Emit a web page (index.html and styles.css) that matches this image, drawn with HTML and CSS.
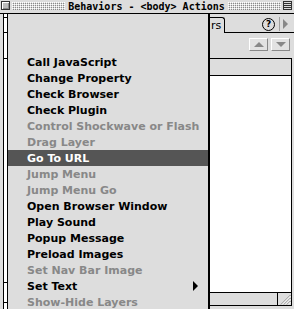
FILE: index.html
```html
<!DOCTYPE html>
<html>
<head>
<meta charset="utf-8">
<link rel="stylesheet" href="styles.css">
</head>
<body>
<div class="window">
  <div class="titlebar">
    <span class="closebox"></span>
    <span class="stripes"></span>
    <span class="title">Behaviors - &lt;body&gt; Actions</span>
    <span class="stripes"></span>
    <span class="collapsebox"></span>
  </div>
  <div class="content">
    <div class="leftstrip">
      <div class="ls-top"></div>
      <div class="ls-box"></div>
      <div class="ls-mid"></div>
      <div class="ls-long"></div>
      <div class="ls-low"></div>
    </div>
    <div class="behind"></div>
    <div class="panel">
      <div class="tabrow">
        <div class="tab">rs</div>
        <div class="tabfill">
          <span class="help">?</span>
          <span class="flyout"><i class="tri-right"></i></span>
        </div>
      </div>
      <div class="toolbar">
        <button class="arrowbtn"><i class="tri-up"></i></button>
        <button class="arrowbtn"><i class="tri-down"></i></button>
      </div>
      <div class="listbox">
        <div class="listhead"></div>
        <div class="listbody"></div>
        <div class="hscroll">
          <span class="track"></span>
          <span class="grip">
            <svg width="13" height="12" viewBox="0 0 13 12">
              <path d="M3 11.5 L12.5 2" stroke="#808080" stroke-width="1"/>
              <path d="M4 11.5 L12.5 3" stroke="#ffffff" stroke-width="1"/>
              <path d="M6 11.5 L12.5 5" stroke="#808080" stroke-width="1"/>
              <path d="M7 11.5 L12.5 6" stroke="#ffffff" stroke-width="1"/>
              <path d="M9 11.5 L12.5 8" stroke="#808080" stroke-width="1"/>
              <path d="M10 11.5 L12.5 9" stroke="#ffffff" stroke-width="1"/>
            </svg>
          </span>
        </div>
      </div>
    </div>
  </div>
  <div class="menu">
    <div class="item"><span>Call JavaScript</span></div>
    <div class="item"><span>Change Property</span></div>
    <div class="item"><span>Check Browser</span></div>
    <div class="item"><span>Check Plugin</span></div>
    <div class="item disabled"><span>Control Shockwave or Flash</span></div>
    <div class="item disabled"><span>Drag Layer</span></div>
    <div class="item active"><span>Go To URL</span></div>
    <div class="item disabled"><span>Jump Menu</span></div>
    <div class="item disabled"><span>Jump Menu Go</span></div>
    <div class="item"><span>Open Browser Window</span></div>
    <div class="item"><span>Play Sound</span></div>
    <div class="item"><span>Popup Message</span></div>
    <div class="item"><span>Preload Images</span></div>
    <div class="item disabled"><span>Set Nav Bar Image</span></div>
    <div class="item"><span>Set Text</span><i class="tri-sub"></i></div>
    <div class="item disabled"><span>Show-Hide Layers</span></div>
  </div>
</div>
</body>
</html>
```
FILE: styles.css
```css
body {
  margin: 0;
  background: #dddddd;
}

.window {
  position: relative;
  width: 294px;
  height: 309px;
  overflow: hidden;
  background: #dddddd;
  font-family: "DejaVu Sans", sans-serif;
  color: #000;
}

/* Title bar */
.titlebar {
  display: flex;
  align-items: flex-start;
  height: 13px;
  border-bottom: 1px solid #000;
  background: #dddddd;
}

.closebox {
  width: 9px;
  height: 9px;
  margin: 1px 2px 0 1px;
  box-sizing: border-box;
  border: 1px solid #333;
  background: #bbbbbb;
  box-shadow: inset 1px 1px 0 #ffffff, inset -1px -1px 0 #888888;
}

.stripes {
  flex: 1;
  height: 8px;
  margin-top: 2px;
  background: conic-gradient(from 90deg at 1px 1px, #8a8a8a 0 90deg, #dddddd 90deg 180deg, #ffffff 180deg 270deg, #dddddd 270deg) 0 0 / 2px 2px;
}

.title {
  font-family: "DejaVu Sans Mono", monospace;
  font-weight: bold;
  font-size: 10px;
  line-height: 13px;
  padding: 0 3px;
  white-space: nowrap;
}

.collapsebox {
  width: 9px;
  height: 9px;
  margin: 1px 2px 0 2px;
  box-sizing: border-box;
  border: 1px solid #333;
  background: repeating-linear-gradient(#dddddd 0 1px, #333333 1px 2px);
}

/* Content under the menu */
.content {
  display: flex;
  height: 295px;
}

.leftstrip {
  width: 3px;
  margin-left: 3px;
  border-left: 1px solid #000;
  background: #ffffff;
  display: flex;
  flex-direction: column;
}

.ls-top { height: 3px; }
.ls-box { height: 14px; border-top: 1px solid #000; border-bottom: 1px solid #000; }
.ls-mid { height: 25px; border-bottom: 1px solid #000; }
.ls-long { height: 223px; border-bottom: 1px solid #000; }
.ls-low { height: 19px; border-bottom: 1px solid #000; }

.behind {
  flex: 1;
}

.panel {
  width: 84px;
  display: flex;
  flex-direction: column;
}

.tabrow {
  display: flex;
  height: 19px;
}

.tab {
  width: 15px;
  height: 16px;
  margin-top: 3px;
  box-sizing: border-box;
  border-top: 1px solid #000;
  border-right: 1px solid #000;
  border-top-right-radius: 3px;
  font-size: 11px;
  line-height: 14px;
  padding: 1px 0 0 1px;
  white-space: nowrap;
  overflow: hidden;
}

.tabfill {
  flex: 1;
  display: flex;
  align-items: flex-end;
  justify-content: flex-end;
  border-bottom: 1px solid #000;
  padding-bottom: 1px;
  box-sizing: border-box;
}

.help {
  width: 13px;
  height: 13px;
  box-sizing: border-box;
  border: 1px solid #000;
  border-radius: 50%;
  font-weight: bold;
  font-size: 9px;
  line-height: 11px;
  text-align: center;
  margin-right: 4px;
}

.flyout {
  width: 15px;
  height: 14px;
  box-sizing: border-box;
  border-left: 1px solid #a0a0a0;
  padding-left: 3px;
  display: flex;
  align-items: center;
}

.tri-right {
  display: block;
  width: 0;
  height: 0;
  border-left: 5px solid #888;
  border-top: 5px solid transparent;
  border-bottom: 5px solid transparent;
}

.toolbar {
  height: 25px;
  display: flex;
  justify-content: flex-end;
  align-items: flex-start;
  gap: 3px;
  padding: 5px 4px 0 0;
  box-sizing: border-box;
}

.arrowbtn {
  width: 19px;
  height: 13px;
  padding: 0;
  margin: 0;
  border: 1px solid;
  border-color: #ffffff #888888 #888888 #ffffff;
  background: #e2e2e2;
  display: flex;
  align-items: center;
  justify-content: center;
  box-sizing: border-box;
}

.tri-up {
  display: block;
  width: 0;
  height: 0;
  border-bottom: 5px solid #888;
  border-left: 5px solid transparent;
  border-right: 5px solid transparent;
}

.tri-down {
  display: block;
  width: 0;
  height: 0;
  border-top: 5px solid #888;
  border-left: 5px solid transparent;
  border-right: 5px solid transparent;
}

.listbox {
  height: 248px;
  box-sizing: border-box;
  border: 1px solid #000;
  border-left: 0;
  margin-right: 2px;
  display: flex;
  flex-direction: column;
  background: #dddddd;
}

.listhead {
  height: 16px;
  border-bottom: 1px solid #000;
  flex: none;
}

.listbody {
  flex: 1;
  background: #ffffff;
}

.hscroll {
  height: 12px;
  border-top: 1px solid #000;
  display: flex;
  flex: none;
}

.track {
  flex: 1;
  border-right: 1px solid #000;
}

.grip {
  width: 13px;
  display: flex;
}

/* Popup menu */
.menu {
  position: absolute;
  left: 7px;
  top: 13px;
  width: 200px;
  border: 1px solid #000;
  border-bottom: 0;
  box-shadow: 1px 0 0 #000;
  background: #dddddd;
  padding-top: 40px;
}

.item {
  height: 16px;
  padding: 0 10px 0 19px;
  font-weight: bold;
  font-size: 11px;
  line-height: 16px;
  white-space: nowrap;
  display: flex;
  justify-content: space-between;
  align-items: center;
}

.item span {
  padding-top: 1px;
}

.item.disabled {
  color: #888888;
}

.item.active {
  background: #555555;
  color: #ffffff;
}

.tri-sub {
  display: block;
  width: 0;
  height: 0;
  border-left: 5px solid #000;
  border-top: 5px solid transparent;
  border-bottom: 5px solid transparent;
}
```
